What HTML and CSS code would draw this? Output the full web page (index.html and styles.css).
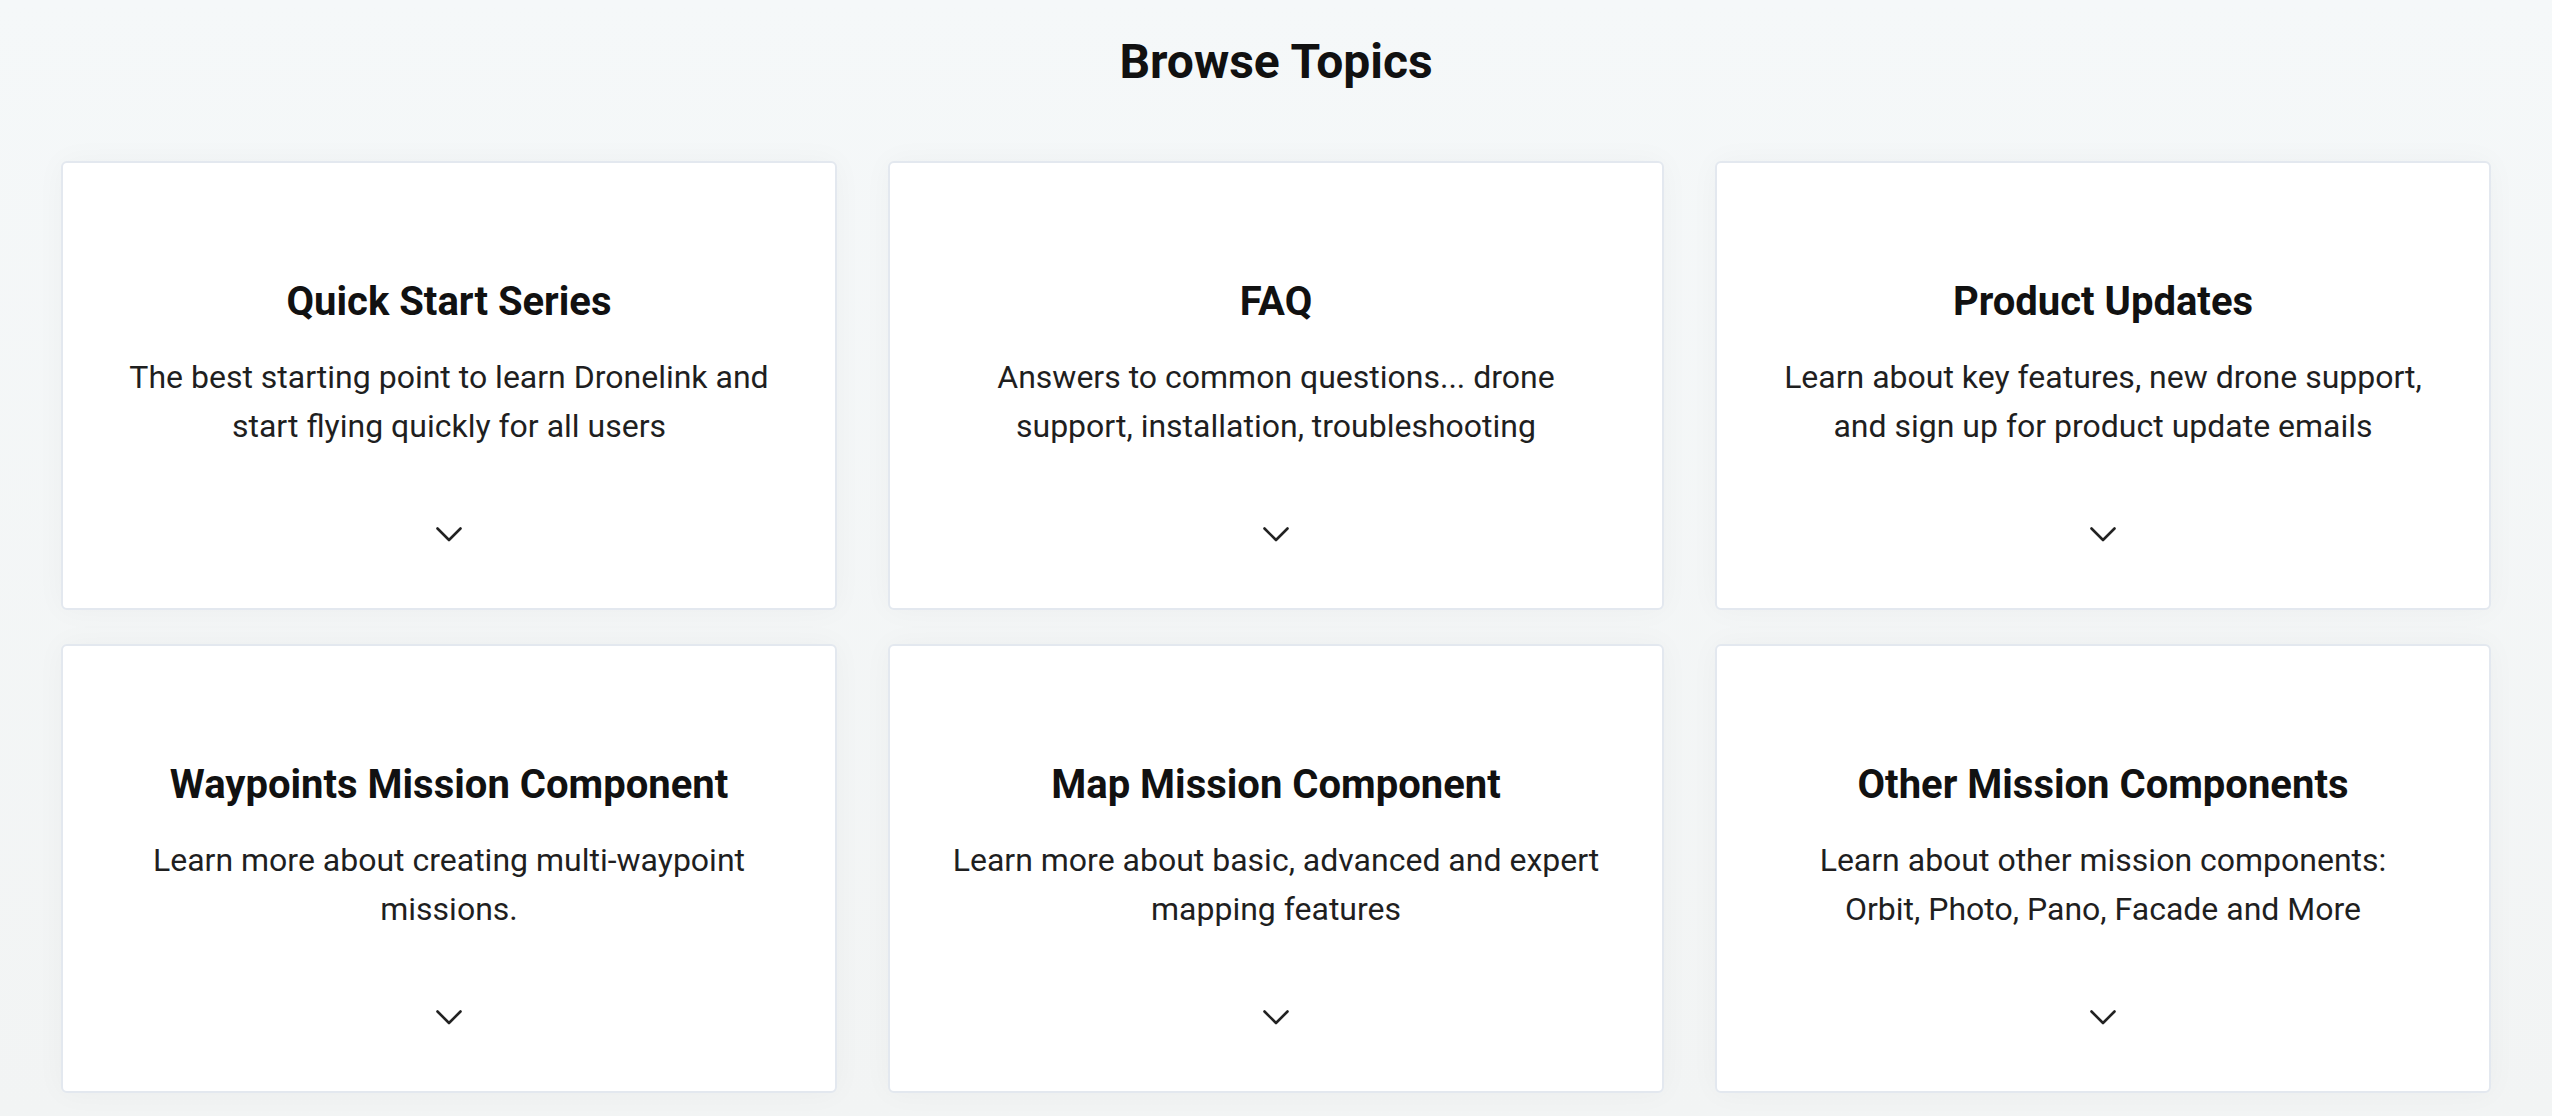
FILE: index.html
```html
<!DOCTYPE html>
<html lang="en">
<head>
    <meta charset="UTF-8">
    <meta name="viewport" content="width=device-width, initial-scale=1.0">
    <title>Browse Topics</title>
    <link rel="stylesheet" href="styles.css">
</head>
<body>

    <!-- Page heading -->
    <h1 class="page-title">Browse Topics</h1>

    <!-- Topic cards -->
    <div class="topic-grid">
        <div class="topic-card">
            <h3>Quick Start Series</h3>
            <p>The best starting point to learn Dronelink and<br>start flying quickly for all users</p>
            <svg class="chevron" width="26" height="15" viewBox="0 0 26 15"><polyline points="1.5,1.5 13,13 24.5,1.5"/></svg>
        </div>
        <div class="topic-card">
            <h3>FAQ</h3>
            <p>Answers to common questions... drone<br>support, installation, troubleshooting</p>
            <svg class="chevron" width="26" height="15" viewBox="0 0 26 15"><polyline points="1.5,1.5 13,13 24.5,1.5"/></svg>
        </div>
        <div class="topic-card">
            <h3>Product Updates</h3>
            <p>Learn about key features, new drone support,<br>and sign up for product update emails</p>
            <svg class="chevron" width="26" height="15" viewBox="0 0 26 15"><polyline points="1.5,1.5 13,13 24.5,1.5"/></svg>
        </div>
        <div class="topic-card">
            <h3>Waypoints Mission Component</h3>
            <p>Learn more about creating multi-waypoint<br>missions.</p>
            <svg class="chevron" width="26" height="15" viewBox="0 0 26 15"><polyline points="1.5,1.5 13,13 24.5,1.5"/></svg>
        </div>
        <div class="topic-card">
            <h3>Map Mission Component</h3>
            <p>Learn more about basic, advanced and expert<br>mapping features</p>
            <svg class="chevron" width="26" height="15" viewBox="0 0 26 15"><polyline points="1.5,1.5 13,13 24.5,1.5"/></svg>
        </div>
        <div class="topic-card">
            <h3>Other Mission Components</h3>
            <p>Learn about other mission components:<br>Orbit, Photo, Pano, Facade and More</p>
            <svg class="chevron" width="26" height="15" viewBox="0 0 26 15"><polyline points="1.5,1.5 13,13 24.5,1.5"/></svg>
        </div>
    </div>

</body>
</html>
```

FILE: styles.css
```css
/* General styling */
* {
    margin: 0;
    padding: 0;
    box-sizing: border-box;
    font-family: Roboto, "Liberation Sans", Arial, sans-serif;
}

body {
    background: linear-gradient(#f5f8f9, #f2f4f4);
    min-height: 100vh;
    color: #111111;
}

.page-title {
    text-align: center;
    font-size: 48px;
    font-weight: 700;
    line-height: 1.2;
    padding-top: 33px;
    margin-bottom: 70px;
    color: #111111;
}

.topic-grid {
    display: grid;
    grid-template-columns: repeat(3, 1fr);
    column-gap: 51px;
    row-gap: 34px;
    padding: 0 61px;
}

.topic-card {
    display: flex;
    flex-direction: column;
    align-items: center;
    text-align: center;
    background-color: white;
    border: 2px solid #e3e8ef;
    border-radius: 6px;
    box-shadow: 0 0 30px rgba(0, 0, 0, 0.035);
    padding: 115px 30px 66px;
}

.topic-card h3 {
    font-size: 40px;
    font-weight: 700;
    line-height: 48px;
    color: #111111;
}

.topic-card p {
    margin-top: 27px;
    font-size: 32px;
    line-height: 49px;
    color: #1f1f1f;
}

.chevron {
    margin-top: 76px;
    fill: none;
    stroke: #222222;
    stroke-width: 2.6;
    stroke-linecap: round;
    stroke-linejoin: round;
}
```
